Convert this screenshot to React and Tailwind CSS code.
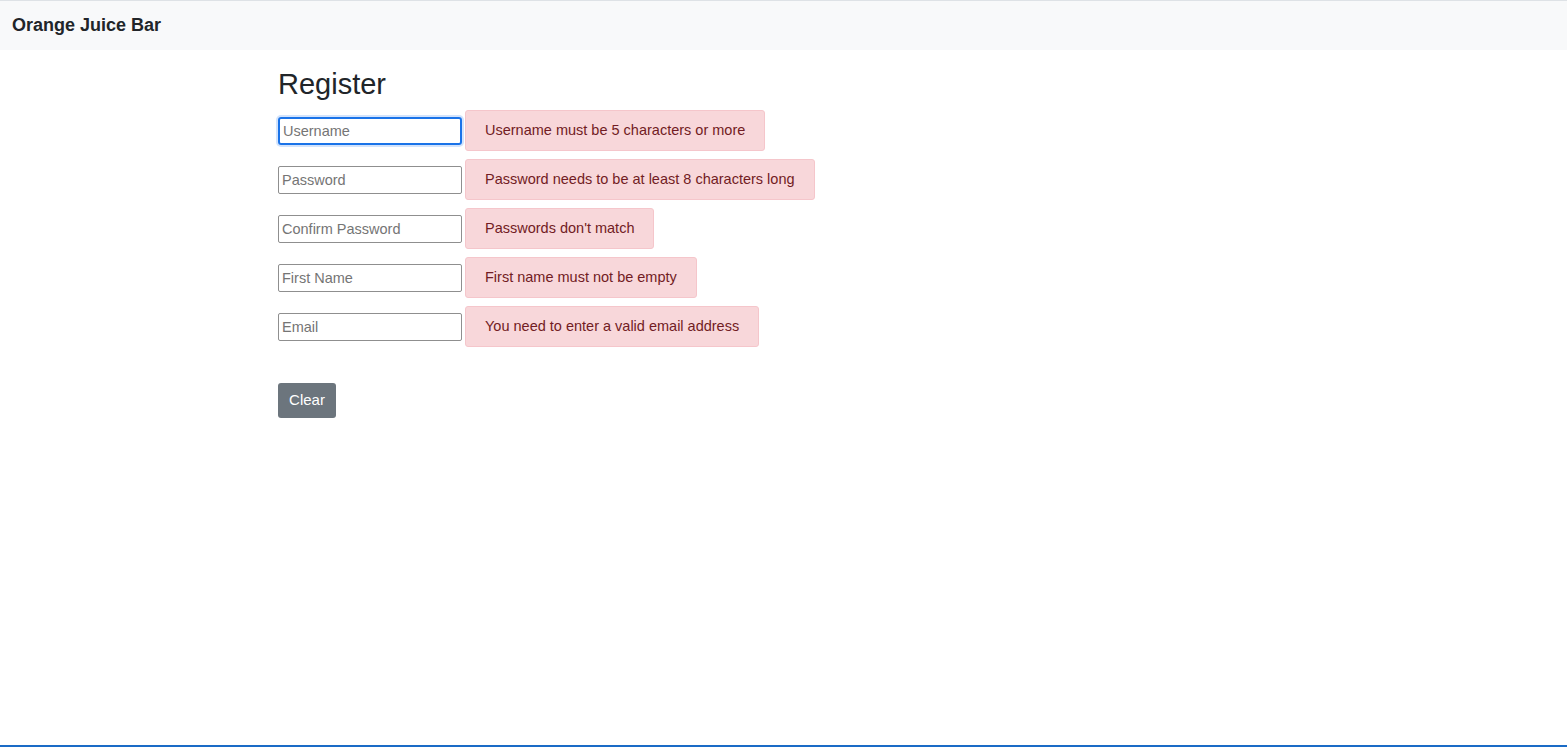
export default function App() {
  const rows = [
    ["Username", "Username must be 5 characters or more", true],
    ["Password", "Password needs to be at least 8 characters long"],
    ["Confirm Password", "Passwords don't match"],
    ["First Name", "First name must not be empty"],
    ["Email", "You need to enter a valid email address"],
  ];
  return (
    <div className="min-h-[747px] flex flex-col bg-white" style={{ fontFamily: '"Liberation Sans", Arial, sans-serif' }}>
      <div className="h-[1px] bg-[#dee2e6]" />
      <nav className="h-[49px] bg-[#f8f9fa] flex items-center px-[12px]">
        <span className="text-[18px] font-bold text-[#212529]">Orange Juice Bar</span>
      </nav>
      <main className="flex-1 pl-[278px] pt-[15px]">
        <h2 className="text-[29px] leading-[38px] text-[#212529] mb-[7px]">Register</h2>
        <div className="flex flex-col gap-[8px]">
          {rows.map(([ph, msg, focus]) => (
            <div key={ph} className="flex items-center gap-[3px]">
              <input
                placeholder={ph}
                className={
                  "w-[184px] h-[28px] px-[3px] text-[14.5px] text-[#212529] placeholder:text-[#757575] outline-none rounded-[2px] " +
                  (focus
                    ? "border-2 border-[#1a73e8] rounded-[3px] shadow-[0_0_0_2px_#d2e3fc]"
                    : "border border-[#8f8f8f]")
                }
              />
              <div className="h-[41px] flex items-center px-[19px] bg-[#f8d7da] border border-[#f5c6cb] rounded-[3px] text-[#721c24] text-[14.5px]">
                {msg}
              </div>
            </div>
          ))}
        </div>
        <button className="mt-[36px] w-[58px] h-[35px] bg-[#6c757d] text-white text-[15px] rounded-[3px]">
          Clear
        </button>
      </main>
      <div className="h-[2px] bg-[#1a6bc6]" />
    </div>
  );
}
